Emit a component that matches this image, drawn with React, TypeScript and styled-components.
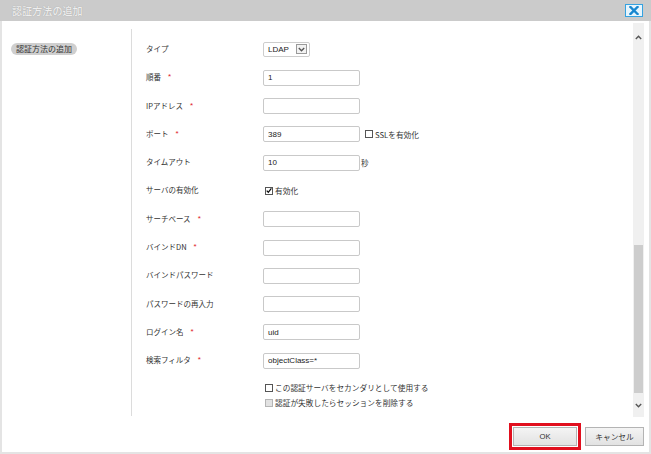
import React from "react";
import styled, { createGlobalStyle } from "styled-components";

const GlobalStyle = createGlobalStyle`
  html, body { margin: 0; padding: 0; background: #fff; }
  body { font-family: "Noto Sans CJK JP", "Noto Sans", sans-serif; color: #333; }
  * { box-sizing: border-box; }
`;

const Dialog = styled.div`
  width: 651px;
  height: 454px;
  display: flex;
  flex-direction: column;
  background: #fff;
`;

const TitleBar = styled.div`
  height: 21px;
  flex: none;
  background: #cbcbcb;
  display: flex;
  align-items: center;
  justify-content: space-between;
  padding: 0 8px 0 12px;
`;

const Title = styled.div`
  font-size: 10px;
  font-weight: 500;
  color: #eeeeee;
  text-shadow: 0 0 1px #9a9a9a;
  letter-spacing: 0.1px;
`;

const CloseButton = styled.div`
  width: 18px;
  height: 13px;
  background: #e6f5fd;
  border: 1px solid #35a2e0;
  display: flex;
  align-items: center;
  justify-content: center;
`;

const Body = styled.div`
  flex: 1;
  display: flex;
  flex-direction: column;
  border: 2px solid #e4e4e4;
  border-top: none;
`;

const Main = styled.div`
  height: 397px;
  flex: none;
  display: flex;
  padding-top: 2px;
`;

const LeftPanel = styled.div`
  width: 130px;
  flex: none;
  margin: 6px 0 2px;
  border-right: 1px solid #dcdcdc;
  padding: 4px 0 0 9px;
`;

const Pill = styled.div`
  display: inline-flex;
  align-items: center;
  height: 12px;
  padding: 0 5px;
  border-radius: 6px;
  background: #cfcfcf;
  font-size: 8px;
  color: #333;
  line-height: 1;
`;

const FormArea = styled.div`
  flex: 1;
  padding: 12.35px 0 0 14px;
  overflow: hidden;
`;

const Row = styled.div`
  display: grid;
  grid-template-columns: 117px 1fr;
  align-items: center;
  height: 28.3px;
`;

const Label = styled.div`
  font-size: 7.5px;
  color: #333;
  display: flex;
  align-items: center;
  margin-top: -2px;
`;

const Required = styled.span`
  color: #e0202a;
  font-size: 8px;
  margin-left: 7px;
  font-family: "Liberation Sans", sans-serif;
`;

const Field = styled.div`
  display: flex;
  align-items: center;
`;

const TextInput = styled.div`
  width: 97px;
  height: 16px;
  border: 1px solid #c9c9c9;
  border-radius: 2px;
  background: #fff;
  font-family: "Liberation Sans", Arial, sans-serif;
  font-size: 8px;
  color: #222;
  display: flex;
  align-items: center;
  padding-left: 4px;
`;

const Select = styled.div`
  width: 47px;
  height: 15px;
  border: 1px solid #cdcdcd;
  border-radius: 2px;
  display: flex;
  align-items: center;
  justify-content: space-between;
  padding: 0 2px 0 4px;
  font-family: "Liberation Sans", Arial, sans-serif;
  font-size: 8px;
  color: #222;
`;

const SelectArrow = styled.div`
  width: 11px;
  height: 10px;
  border: 1px solid #9a9a9a;
  background: #f2f2f2;
  display: flex;
  align-items: center;
  justify-content: center;
`;

const Box = styled.span<{ $disabled?: boolean }>`
  display: inline-flex;
  align-items: center;
  justify-content: center;
  width: 8px;
  height: 8px;
  border: 1px solid ${(p) => (p.$disabled ? "#b5b5b5" : "#555")};
  background: ${(p) => (p.$disabled ? "#e2e2e2" : "#fff")};
  flex: none;
`;

const CheckText = styled.span`
  font-size: 7.7px;
  color: #333;
  margin-left: 2px;
`;

const Inline = styled.label<{ $gap?: number }>`
  display: inline-flex;
  align-items: center;
  margin-left: ${(p) => p.$gap ?? 0}px;
`;

const Unit = styled.span`
  font-size: 7.5px;
  color: #333;
  margin-left: 1px;
`;

const CheckList = styled.div`
  margin: 5.5px 0 0 119px;
  display: flex;
  flex-direction: column;
`;

const CheckLine = styled.div`
  height: 15px;
  display: flex;
  align-items: center;
`;

const ScrollTrack = styled.div`
  width: 11px;
  flex: none;
  margin: 0 5px 1px 0;
  background: #f0f0f0;
  display: flex;
  flex-direction: column;
`;

const ScrollArrow = styled.div<{ $h: number }>`
  height: ${(p) => p.$h}px;
  flex: none;
  display: flex;
  align-items: center;
  justify-content: center;
`;

const ScrollSpacer = styled.div`
  flex: 1;
`;

const ScrollThumb = styled.div`
  height: 148px;
  flex: none;
  background: #cdcdcd;
  margin: 0 1px;
`;

const Footer = styled.div`
  flex: 1;
  display: flex;
  align-items: center;
  justify-content: flex-end;
  padding: 3px 5px 0 0;
  gap: 4px;
`;

const Focus = styled.div`
  border: 3px solid #e10f1e;
  padding: 1px;
  display: flex;
`;

const Button = styled.div<{ $w: number }>`
  width: ${(p) => p.$w}px;
  height: 19px;
  border: 1px solid #b4b4b4;
  background: linear-gradient(#f4f4f4, #e2e2e2);
  display: flex;
  align-items: center;
  justify-content: center;
  font-size: 7.7px;
  color: #333;
  font-family: "Liberation Sans", "Noto Sans CJK JP", sans-serif;
`;

const Chevron = ({ up }: { up?: boolean }) => (
  <svg width="7" height="5" viewBox="0 0 7 5">
    <polyline
      points={up ? "0.8,4 3.5,1.3 6.2,4" : "0.8,1 3.5,3.7 6.2,1"}
      fill="none"
      stroke="#555"
      strokeWidth="1.4"
    />
  </svg>
);

const CheckMark = () => (
  <svg width="7" height="7" viewBox="0 0 7 7">
    <polyline points="0.8,3.6 2.7,5.6 6.3,0.9" fill="none" stroke="#111" strokeWidth="1.5" />
  </svg>
);

type FieldRow = { label: string; req?: boolean; value?: string; extra?: React.ReactNode };

const rows: FieldRow[] = [
  { label: "順番", req: true, value: "1" },
  { label: "IPアドレス", req: true, value: "" },
  {
    label: "ポート",
    req: true,
    value: "389",
    extra: (
      <Inline $gap={5}>
        <Box />
        <CheckText>SSLを有効化</CheckText>
      </Inline>
    ),
  },
  { label: "タイムアウト", value: "10", extra: <Unit>秒</Unit> },
];

const rows2: FieldRow[] = [
  { label: "サーチベース", req: true, value: "" },
  { label: "バインドDN", req: true, value: "" },
  { label: "バインドパスワード", value: "" },
  { label: "パスワードの再入力", value: "" },
  { label: "ログイン名", req: true, value: "uid" },
  { label: "検索フィルタ", req: true, value: "objectClass=*" },
];

const renderRow = (r: FieldRow) => (
  <Row key={r.label}>
    <Label>
      {r.label}
      {r.req && <Required>*</Required>}
    </Label>
    <Field>
      <TextInput>{r.value}</TextInput>
      {r.extra}
    </Field>
  </Row>
);

export default function App() {
  return (
    <>
      <GlobalStyle />
      <Dialog>
        <TitleBar>
          <Title>認証方法の追加</Title>
          <CloseButton>
            <svg width="10" height="9" viewBox="0 0 10 9">
              <path d="M1.5 1 L8.5 8 M8.5 1 L1.5 8" stroke="#1787d0" strokeWidth="2.4" strokeLinecap="square" />
            </svg>
          </CloseButton>
        </TitleBar>
        <Body>
          <Main>
            <LeftPanel>
              <Pill>認証方法の追加</Pill>
            </LeftPanel>
            <FormArea>
              <Row>
                <Label>タイプ</Label>
                <Field>
                  <Select>
                    LDAP
                    <SelectArrow>
                      <Chevron />
                    </SelectArrow>
                  </Select>
                </Field>
              </Row>
              {rows.map(renderRow)}
              <Row>
                <Label>サーバの有効化</Label>
                <Field>
                  <Inline $gap={2}>
                    <Box>
                      <CheckMark />
                    </Box>
                    <CheckText>有効化</CheckText>
                  </Inline>
                </Field>
              </Row>
              {rows2.map(renderRow)}
              <CheckList>
                <CheckLine>
                  <Box />
                  <CheckText>この認証サーバをセカンダリとして使用する</CheckText>
                </CheckLine>
                <CheckLine>
                  <Box $disabled />
                  <CheckText>認証が失敗したらセッションを削除する</CheckText>
                </CheckLine>
              </CheckList>
            </FormArea>
            <ScrollTrack>
              <ScrollArrow $h={28}>
                <Chevron up />
              </ScrollArrow>
              <ScrollSpacer />
              <ScrollThumb />
              <ScrollArrow $h={24}>
                <Chevron />
              </ScrollArrow>
            </ScrollTrack>
          </Main>
          <Footer>
            <Focus>
              <Button $w={64}>OK</Button>
            </Focus>
            <Button $w={59}>キャンセル</Button>
          </Footer>
        </Body>
      </Dialog>
    </>
  );
}
